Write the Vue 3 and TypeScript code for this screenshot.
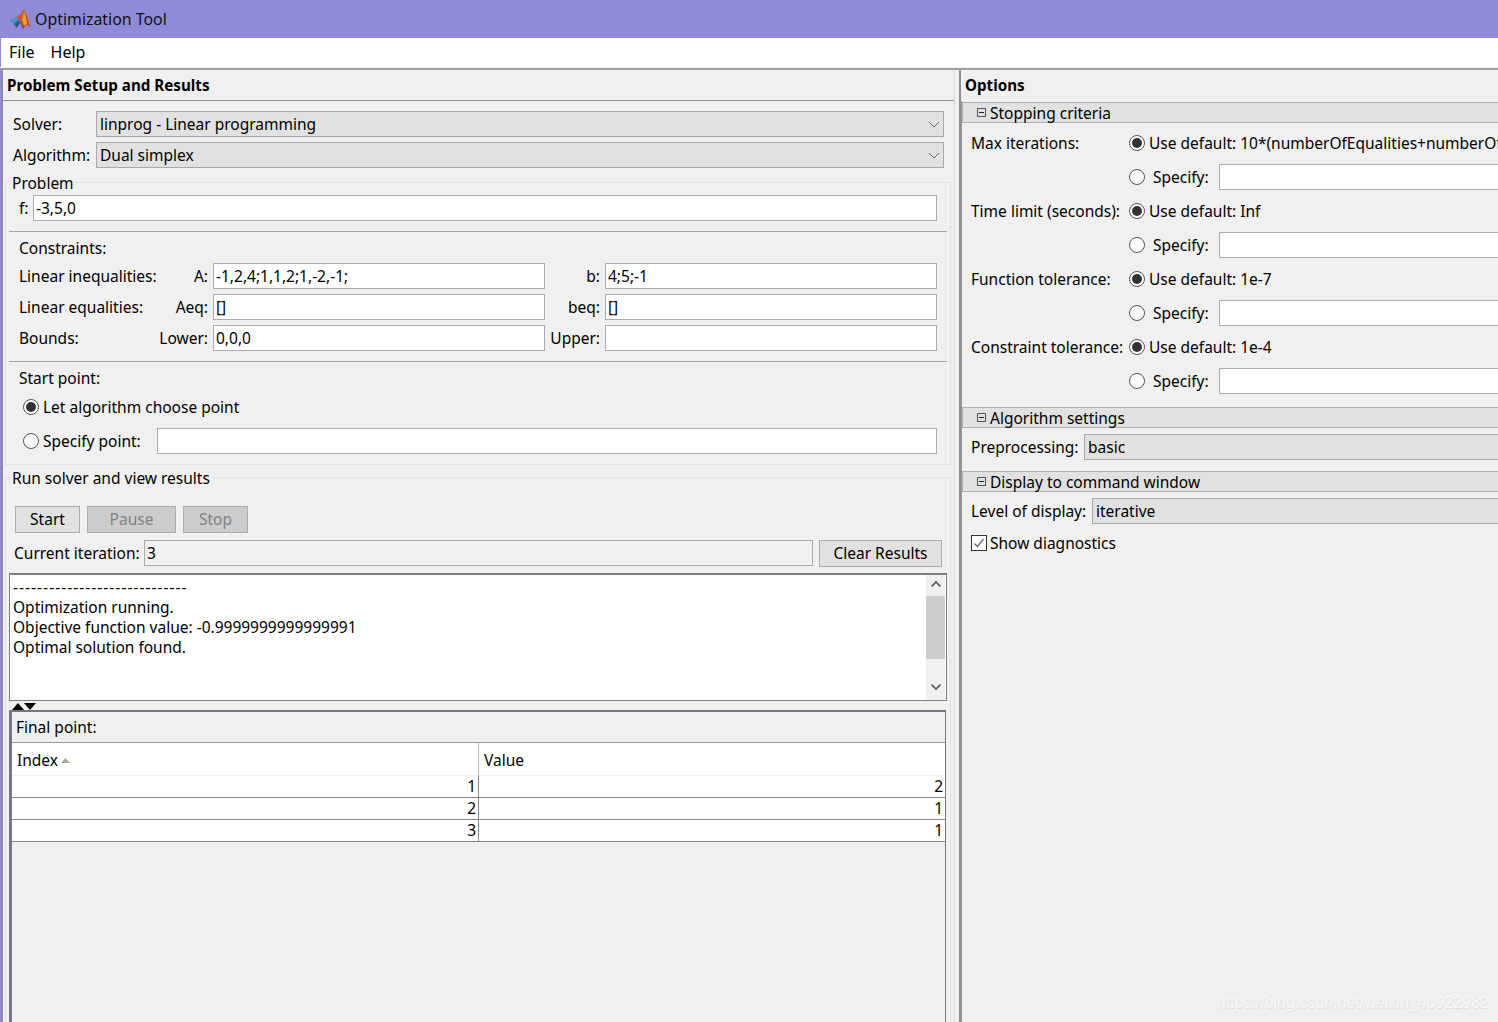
<script setup lang="ts">
interface Stop { label: string; value: string }
const stops: Stop[] = [
  { label: 'Max iterations:', value: '10*(numberOfEqualities+numberOfInequalities+length(c))' },
  { label: 'Time limit (seconds):', value: 'Inf' },
  { label: 'Function tolerance:', value: '1e-7' },
  { label: 'Constraint tolerance:', value: '1e-4' },
]
const results: number[][] = [[1, 2], [2, 1], [3, 1]]
</script>

<template>
  <div class="win">
    <div class="title">
      <svg class="logo" width="22" height="22" viewBox="0 0 22 22">
        <path d="M0.500 12.500 7 8.500 9.500 11.500 5 16Z" fill="#4c94c8" />
        <path d="M5 16 9.500 11.500 11.500 15 7.500 20Z" fill="#27658f" />
        <path d="M7 9 11.500 6 15 1 11.500 15 9.500 11.500Z" fill="#cf5a26" />
        <path d="M15 1 18 8.500 21.500 19.500 18 16.500 13.500 21 11.500 15Z" fill="#bd421a" />
        <path d="M15 2.500 17 9.500 18.500 15.500 15 18 13 12Z" fill="#eb9a35" />
      </svg>
      <span>Optimization Tool</span>
    </div>
    <div class="menu"><span>File</span><span>Help</span></div>

    <div class="main">
      <section class="left">
        <h2 class="head">Problem Setup and Results</h2>
        <div class="left-body">
          <div class="solver-row">
            <span>Solver:</span>
            <div class="select">linprog - Linear programming
              <svg width="12" height="7" viewBox="0 0 12 7"><path d="M1 1 6 6 11 1" fill="none" stroke="#666" /></svg>
            </div>
          </div>
          <div class="solver-row second">
            <span>Algorithm:</span>
            <div class="select">Dual simplex
              <svg width="12" height="7" viewBox="0 0 12 7"><path d="M1 1 6 6 11 1" fill="none" stroke="#666" /></svg>
            </div>
          </div>

          <div class="group problem">
            <div class="legend">Problem</div>
            <div class="f-row"><span>f:</span><div class="field">-3,5,0</div></div>
            <hr />
            <div class="text-line constraints">Constraints:</div>
            <div class="matrix first">
              <div class="mlabel"><span>Linear inequalities:</span><span>A:</span></div>
              <div class="field">-1,2,4;1,1,2;1,-2,-1;</div>
              <div class="rlabel">b:</div>
              <div class="field">4;5;-1</div>
            </div>
            <div class="matrix">
              <div class="mlabel"><span>Linear equalities:</span><span>Aeq:</span></div>
              <div class="field">[]</div>
              <div class="rlabel">beq:</div>
              <div class="field">[]</div>
            </div>
            <div class="matrix">
              <div class="mlabel"><span>Bounds:</span><span>Lower:</span></div>
              <div class="field">0,0,0</div>
              <div class="rlabel">Upper:</div>
              <div class="field"></div>
            </div>
            <hr />
            <div class="text-line constraints">Start point:</div>
            <div class="choice let"><i class="radio on"></i><span>Let algorithm choose point</span></div>
            <div class="choice spec">
              <i class="radio"></i><span>Specify point:</span>
              <div class="field"></div>
            </div>
          </div>

          <div class="group run">
            <div class="legend">Run solver and view results</div>
            <div class="buttons">
              <div class="btn start">Start</div>
              <div class="btn off pause">Pause</div>
              <div class="btn off stop">Stop</div>
            </div>
            <div class="iter">
              <span class="iter-label">Current iteration:</span>
              <div class="field flat">3</div>
              <div class="btn clear">Clear Results</div>
            </div>
            <div class="log">
              <div class="log-text">
                <div class="dash">-----------------------------</div>
                <div>Optimization running.</div>
                <div>Objective function value: -0.9999999999999991</div>
                <div>Optimal solution found.</div>
              </div>
              <div class="scroll">
                <svg width="12" height="8" viewBox="0 0 12 8"><path d="M1.500 6.500 6 2 10.500 6.500" fill="none" stroke="#555" stroke-width="1.600" /></svg>
                <div class="thumb"></div>
                <svg class="down" width="12" height="8" viewBox="0 0 12 8"><path d="M1.500 1.500 6 6 10.500 1.500" fill="none" stroke="#555" stroke-width="1.600" /></svg>
              </div>
            </div>
            <div class="split">
              <svg width="24" height="7" viewBox="0 0 24 7"><path d="M0 7 6 0 12 7Z M12 0H24L18 7Z" fill="#000" /></svg>
            </div>
            <div class="final">
              <div class="final-title">Final point:</div>
              <div class="table">
                <div class="thead">
                  <div class="th">Index<svg width="9" height="5" viewBox="0 0 9 5"><path d="M0 5 4.500 0 9 5Z" fill="#a9a99c" /></svg></div>
                  <div class="th second-col">Value</div>
                </div>
                <div v-for="r in results" :key="r[0]" class="tr">
                  <div class="td">{{ r[0] }}</div>
                  <div class="td second-col">{{ r[1] }}</div>
                </div>
              </div>
            </div>
          </div>
        </div>
      </section>

      <section class="right">
        <h2 class="head opts">Options</h2>
        <div class="right-body">
          <div class="bar"><i class="minus"></i>Stopping criteria</div>
          <div class="stops">
            <template v-for="s in stops" :key="s.label">
              <div class="opt-row">
                <span class="opt-label">{{ s.label }}</span>
                <i class="radio on"></i>
                <span class="def">Use default: {{ s.value }}</span>
              </div>
              <div class="opt-row">
                <span class="opt-label"></span>
                <i class="radio"></i>
                <span class="spec-label">Specify:</span>
                <div class="field grow"></div>
              </div>
            </template>
          </div>
          <div class="bar algo"><i class="minus"></i>Algorithm settings</div>
          <div class="opt-select"><span class="pre">Preprocessing:</span><div class="select">basic</div></div>
          <div class="bar display"><i class="minus"></i>Display to command window</div>
          <div class="opt-select"><span class="lev">Level of display:</span><div class="select">iterative</div></div>
          <div class="check-row">
            <i class="check">
              <svg width="14" height="14" viewBox="0 0 14 14"><path d="M2.500 7.500 5.500 10.500 11.500 3" fill="none" stroke="#666" stroke-width="1.300" /></svg>
            </i>
            <span>Show diagnostics</span>
          </div>
        </div>
      </section>
    </div>
    <div class="mark">https://blog.csdn.net/weixin_40922982</div>
  </div>
</template>

<style>
html, body { margin: 0; background: #f0f0f0; overflow: hidden; }
</style>

<style scoped>
.win {
  position: relative;
  width: 1498px;
  height: 1022px;
  overflow: hidden;
  background: #f0f0f0;
  color: #000;
  font-family: "Noto Sans", "Open Sans", sans-serif;
  font-size: 15.500px;
  line-height: 24px;
  white-space: nowrap;
}
.title {
  height: 38px;
  background: #8f8bd9;
  display: flex;
  align-items: center;
  padding-left: 9px;
  gap: 4px;
  font-size: 15.900px;
  color: #111;
}
.menu {
  height: 29px;
  background: #fff;
  display: flex;
  align-items: center;
  gap: 16px;
  border-left: 1px solid #8f8bd9;
  box-sizing: border-box;
  padding: 0 0 2px 8px;
  font-size: 16px;
}
.main {
  display: grid;
  grid-template-columns: 959px 1fr;
  height: 955px;
  border-top: 2px solid #a0a0a0;
  border-left: 1px solid #8f8bd9;
  box-sizing: border-box;
  margin-top: 1px;
}
.left {
  border-left: 2px solid #8c8c98;
  border-right: 1px solid #dcdcdc;
  display: flex;
  flex-direction: column;
  min-width: 0;
  box-sizing: border-box;
  width: 954px;
}
.head {
  margin: 0;
  height: 31px;
  line-height: 30px;
  padding-left: 4px;
  font-size: 15.200px;
  font-weight: 700;
  box-sizing: border-box;
  border-bottom: 1px solid #8e8e99;
}
.left-body {
  flex: 1;
  display: flex;
  flex-direction: column;
  padding-top: 10px;
  min-height: 0;
}
.solver-row {
  display: grid;
  grid-template-columns: 83px 848px;
  padding-left: 10px;
  align-items: center;
}
.solver-row.second { margin-top: 5px; }
.select {
  height: 26px;
  line-height: 24px;
  background: #e1e1e1;
  border: 1px solid #a9a9a9;
  box-sizing: border-box;
  padding: 0 3px;
  display: flex;
  align-items: center;
  justify-content: space-between;
}
.group {
  border: 1px solid #e3e3e3;
  margin-left: 2px;
  width: 946px;
  box-sizing: border-box;
  padding: 0 13px;
}
.problem {
  margin-top: 14px;
  padding-bottom: 10px;
}
.legend {
  margin-top: -12px;
  margin-left: -9px;
  padding: 0 1px 0 2px;
  width: fit-content;
  background: #f0f0f0;
  height: 24px;
}
.f-row {
  display: grid;
  grid-template-columns: 14px 1fr;
  align-items: center;
}
.field {
  height: 26px;
  line-height: 24px;
  background: #fff;
  border: 1px solid #ababab;
  box-sizing: border-box;
  padding-left: 2px;
  min-width: 0;
}
hr {
  border: 0;
  height: 1px;
  background: #a5a5a5;
  margin: 10px -10px 0;
}
.text-line { height: 24px; }
.constraints { margin-top: 4px; }
.matrix {
  display: grid;
  grid-template-columns: 194px 332px 60px 332px;
  margin-top: 5px;
  align-items: center;
}
.matrix.first { margin-top: 3px; }
.mlabel {
  display: flex;
  justify-content: space-between;
  padding-right: 5px;
}
.rlabel {
  text-align: right;
  padding-right: 5px;
}
.choice {
  display: flex;
  align-items: center;
  padding-left: 4px;
  gap: 4px;
}
.let { margin-top: 5px; }
.spec { margin-top: 9px; }
.spec .field {
  flex: 1;
  margin-left: 12px;
}
.radio {
  width: 16px;
  height: 16px;
  flex: none;
  border: 1.300px solid #555;
  border-radius: 50%;
  background: #fff;
  box-sizing: border-box;
  display: block;
  position: relative;
}
.radio.on::after {
  content: "";
  position: absolute;
  inset: 1.700px;
  border-radius: 50%;
  background: #333;
}
.run {
  margin-top: 12px;
  flex: 1;
  padding: 0;
  min-height: 0;
}
.run .legend { margin-left: 4px; }
.buttons {
  display: flex;
  gap: 7px;
  margin: 16px 0 0 9px;
}
.btn {
  height: 27px;
  line-height: 25px;
  text-align: center;
  background: #e1e1e1;
  border: 1px solid #adadad;
  box-sizing: border-box;
}
.start, .stop { width: 65px; }
.pause { width: 89px; }
.off {
  background: #cccccc;
  color: #838383;
}
.iter {
  display: grid;
  grid-template-columns: 130px 669px 123px;
  align-items: start;
  margin: 7px 0 0 8px;
}
.iter-label { line-height: 26px; }
.flat { background: #f0f0f0; }
.clear { margin-left: 6px; width: 123px; }
.log {
  display: flex;
  margin: 6px 0 0 3px;
  width: 938px;
  height: 128px;
  background: #fff;
  border: 1px solid #7d7d85;
  border-top-width: 2px;
  box-sizing: border-box;
}
.log-text {
  flex: 1;
  padding: 2px 0 0 3px;
  line-height: 20px;
  min-width: 0;
}
.dash { height: 20px; letter-spacing: 1.030px; }
.scroll {
  width: 19px;
  background: #f0f0f0;
  display: flex;
  flex-direction: column;
  align-items: center;
  margin-right: 1px;
  padding-top: 5px;
  box-sizing: border-box;
}
.thumb {
  width: 19px;
  height: 63px;
  background: #cdcdcd;
  margin-top: 8px;
}
.down { margin-top: 24px; }
.split {
  height: 9px;
  margin-left: 6px;
  padding-top: 2px;
  box-sizing: border-box;
  line-height: 0;
}
.final {
  margin-left: 3px;
  width: 937px;
  height: 400px;
  border: 2px solid #77777f;
  border-width: 2px 1px 0 3px;
  box-sizing: border-box;
}
.final-title {
  height: 30px;
  line-height: 30px;
  padding-left: 4px;
}
.table {
  background: #fff;
  border-top: 1px solid #999;
  box-sizing: border-box;
}
.thead {
  display: grid;
  grid-template-columns: 466px 1fr;
  height: 33px;
  border-bottom: 1px solid #f0f0f0;
  box-sizing: border-box;
}
.th {
  padding-left: 5px;
  line-height: 34px;
  display: flex;
  align-items: center;
  gap: 3px;
}
.second-col { border-left: 1px solid #bbb; }
.tr {
  display: grid;
  grid-template-columns: 466px 1fr;
  height: 22px;
  border-bottom: 1px solid #85858b;
  box-sizing: border-box;
}
.td {
  text-align: right;
  padding-right: 2px;
  line-height: 21px;
}
.td.second-col { border-left-color: #85858b; }
.right {
  margin-left: -1px;
  display: flex;
  flex-direction: column;
  border-left: 2px solid #8e8e96;
  min-width: 0;
  width: 540px;
  box-sizing: border-box;
}
.opts {
  padding-left: 4px;
  height: 31px;
  border-bottom: 0;
}
.right-body {
  border-left: 1px solid #9a9aa2;
  flex: 1;
  overflow: hidden;
  padding-top: 1px;
}
.bar {
  height: 21px;
  line-height: 20px;
  background: #e1e1e1;
  border: 1px solid #b0b0b0;
  border-right: 0;
  box-sizing: border-box;
  display: flex;
  align-items: center;
  padding-left: 14px;
  gap: 4px;
}
.minus {
  width: 9px;
  height: 9px;
  border: 1px solid #555;
  box-sizing: border-box;
  display: block;
  position: relative;
  flex: none;
}
.minus::after {
  content: "";
  position: absolute;
  left: 1px;
  right: 1px;
  top: 3px;
  height: 1px;
  background: #223;
}
.stops { margin-top: 3px; }
.opt-row {
  display: flex;
  align-items: center;
  height: 34px;
}
.opt-label {
  width: 167px;
  padding-left: 9px;
  box-sizing: border-box;
  flex: none;
}
.def { margin-left: 4px; }
.spec-label {
  margin-left: 8px;
  width: 66px;
  flex: none;
}
.grow {
  flex: 1;
  border-right: 0;
}
.algo { margin-top: 9px; }
.display { margin-top: 11px; }
.opt-select {
  display: flex;
  align-items: center;
  padding-left: 9px;
  gap: 5px;
  margin-top: 6px;
}
.pre { width: 108px; flex: none; }
.lev { width: 116px; flex: none; }
.opt-select .select { flex: 1; border-right: 0; }
.check-row {
  display: flex;
  align-items: center;
  gap: 3px;
  padding-left: 9px;
  margin-top: 7px;
}
.check {
  width: 16px;
  height: 16px;
  border: 1px solid #333;
  background: #fff;
  box-sizing: border-box;
  display: flex;
  align-items: center;
  justify-content: center;
  flex: none;
}
.logo { flex: none; }
.mark {
  position: absolute;
  right: 9px;
  top: 992px;
  font-family: "Liberation Sans", sans-serif;
  font-size: 16px;
  line-height: 22px;
  color: #f8f8f8;
  text-shadow: 0.500px 0.500px 1px #dcdcdc;
}
</style>
